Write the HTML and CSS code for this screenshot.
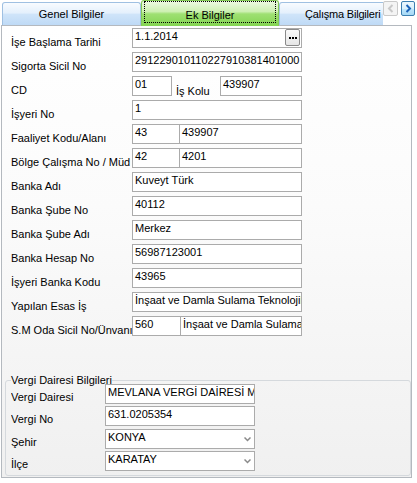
FILE: index.html
```html
<!DOCTYPE html>
<html lang="tr">
<head>
<meta charset="utf-8">
<title>Ek Bilgiler</title>
<link rel="stylesheet" href="styles.css">
</head>
<body>
<div class="window">
  <div class="tabbar">
    <div class="tabs">
      <div class="tab tab-blue first">Genel Bilgiler</div>
      <div class="tab tab-green active"><span class="focus">Ek Bilgiler</span></div>
      <div class="tab tab-blue last">Çalışma Bilgileri</div>
    </div>
    <div class="scroll-btn disabled">
      <svg width="8" height="9" viewBox="0 0 8 9"><path d="M5.5 1 L2 4.5 L5.5 8" fill="none" stroke="#c8c8c8" stroke-width="2"/></svg>
    </div>
    <div class="scroll-btn enabled">
      <svg width="8" height="9" viewBox="0 0 8 9"><path d="M2.5 1 L6 4.5 L2.5 8" fill="none" stroke="#1b62b8" stroke-width="2"/></svg>
    </div>
  </div>
  <div class="page">
    <div class="form">
      <div class="lbl">İşe Başlama Tarihi</div>
      <div class="field with-btn"><span class="val">1.1.2014</span>
        <span class="dots"><svg width="8" height="2" viewBox="0 0 8 2"><rect x="0" y="0" width="2" height="2" fill="#000"/><rect x="3" y="0" width="2" height="2" fill="#000"/><rect x="6" y="0" width="2" height="2" fill="#000"/></svg></span>
      </div>

      <div class="lbl">Sigorta Sicil No</div>
      <div class="field">291229010110227910381401000</div>

      <div class="lbl">CD</div>
      <div class="fieldrow">
        <div class="field w-cd">01</div>
        <div class="inline-lbl">İş Kolu</div>
        <div class="field w-iskolu">439907</div>
      </div>

      <div class="lbl">İşyeri No</div>
      <div class="field">1</div>

      <div class="lbl">Faaliyet Kodu/Alanı</div>
      <div class="fieldrow">
        <div class="field w-a">43</div>
        <div class="field w-b">439907</div>
      </div>

      <div class="lbl">Bölge Çalışma No / Müd</div>
      <div class="fieldrow">
        <div class="field w-a">42</div>
        <div class="field w-b">4201</div>
      </div>

      <div class="lbl">Banka Adı</div>
      <div class="field">Kuveyt Türk</div>

      <div class="lbl">Banka Şube No</div>
      <div class="field">40112</div>

      <div class="lbl">Banka Şube Adı</div>
      <div class="field">Merkez</div>

      <div class="lbl">Banka Hesap No</div>
      <div class="field">56987123001</div>

      <div class="lbl">İşyeri Banka Kodu</div>
      <div class="field">43965</div>

      <div class="lbl">Yapılan Esas İş</div>
      <div class="field">İnşaat ve Damla Sulama Teknolojileri</div>

      <div class="lbl">S.M Oda Sicil No/Ünvanı</div>
      <div class="fieldrow">
        <div class="field w-a2">560</div>
        <div class="field w-b2">İnşaat ve Damla Sulama Teknolojileri</div>
      </div>
    </div>

    <fieldset class="group">
      <legend>Vergi Dairesi Bilgileri</legend>
      <div class="vform">
        <div class="vlbl">Vergi Dairesi</div>
        <div class="field">MEVLANA VERGİ DAİRESİ MÜDÜRLÜĞÜ</div>

        <div class="vlbl">Vergi No</div>
        <div class="field">631.0205354</div>

        <div class="vlbl">Şehir</div>
        <div class="field combo"><span class="val">KONYA</span>
          <svg class="chev" width="7" height="5" viewBox="0 0 7 5"><path d="M0.5 0.5 L3.5 3.5 L6.5 0.5" fill="none" stroke="#8a8a8a" stroke-width="1.5"/></svg>
        </div>

        <div class="vlbl">İlçe</div>
        <div class="field combo"><span class="val">KARATAY</span>
          <svg class="chev" width="7" height="5" viewBox="0 0 7 5"><path d="M0.5 0.5 L3.5 3.5 L6.5 0.5" fill="none" stroke="#8a8a8a" stroke-width="1.5"/></svg>
        </div>
      </div>
    </fieldset>
  </div>
</div>
</body>
</html>
```

FILE: styles.css
```css
* { box-sizing: border-box; }

body {
  margin: 0;
  background: #ffffff;
  font-family: "Liberation Sans", Arial, sans-serif;
  font-size: 11px;
  color: #000;
}

.window {
  width: 417px;
  height: 483px;
}

/* ---------- tab strip ---------- */
.tabbar {
  display: flex;
  align-items: flex-start;
  height: 26px;
  position: relative;
  z-index: 1;
}

.tabs {
  display: flex;
  align-items: flex-start;
  width: 383px;
  height: 26px;
  overflow: hidden;
  padding-left: 2px;
}

.tab {
  flex: none;
  width: 138px;
  height: 23px;
  margin-top: 2px;
  border: 1px solid #9fc0e2;
  border-bottom: none;
  border-radius: 3px 3px 0 0;
  text-align: center;
  line-height: 13px;
  padding-top: 5px;
  white-space: nowrap;
}

.tab.first { width: 139px; }

.tab.last {
  text-align: left;
  padding-left: 25px;
  letter-spacing: -0.2px;
}

.tab-blue {
  background: linear-gradient(#f8fbff 0%, #e4f0fc 45%, #cfe4f9 52%, #bfdaf6 100%);
}

.tab-green {
  border-color: #84c957;
  background: linear-gradient(#eefae4 0%, #cdf0b2 42%, #9ee072 52%, #84d552 100%);
}

.tab.active {
  height: 26px;
  margin-top: 0;
  padding: 0 2px;
}

.focus {
  display: block;
  height: 22px;
  border: 1px dotted #000;
  padding-top: 7px;
  line-height: 13px;
}

.scroll-btn {
  flex: none;
  height: 15px;
  margin-top: 1px;
  border: 1px solid #c9c9c9;
  border-radius: 2px;
  display: flex;
  align-items: center;
  justify-content: center;
}

.scroll-btn.disabled {
  width: 15px;
  background: #f4f4f4;
}

.scroll-btn.enabled {
  width: 14px;
  margin-left: 3px;
  border-color: #3c7fb1;
  background: linear-gradient(#eaf6fd, #d9f0fc 50%, #bee6fd 51%, #a7d9f5);
}

/* ---------- page ---------- */
.page {
  margin-top: -1px;
  margin-left: 1px;
  width: 411px;
  height: 453px;
  border: 1px solid #b4b9bf;
  background: linear-gradient(#ffffff 0%, #fbfbfb 40%, #f0f0f0 100%);
  padding: 2px 1px 0 1px;
}

.form {
  display: grid;
  grid-template-columns: 121px 170px;
  grid-auto-rows: 20px;
  row-gap: 4px;
  padding-left: 8px;
}

.lbl, .vlbl {
  white-space: nowrap;
  overflow: hidden;
  line-height: 13px;
  padding-top: 8px;
  height: 22px;
}

.field {
  height: 20px;
  border: 1px solid #ababab;
  background: #fff;
  padding: 1px 2px 0;
  line-height: 13px;
  white-space: nowrap;
  overflow: hidden;
}

.fieldrow {
  display: flex;
  align-items: flex-start;
}

.w-cd { width: 40px; }
.inline-lbl {
  width: 48px;
  padding-left: 4px;
  padding-top: 9px;
  line-height: 13px;
  white-space: nowrap;
}
.w-iskolu { width: 82px; }

.w-a { width: 48px; }
.w-b { width: 123px; margin-left: -1px; }
.w-a2 { width: 49px; }
.w-b2 { width: 122px; margin-left: -1px; }

.with-btn {
  display: flex;
  justify-content: space-between;
  padding-right: 1px;
}

.dots {
  flex: none;
  width: 15px;
  height: 17px;
  margin-top: -1px;
  border: 1px solid #8a8a8a;
  border-radius: 2px;
  background: linear-gradient(#fafafa, #e6e6e6);
  display: flex;
  align-items: center;
  justify-content: center;
}

.dots svg { display: block; }

/* ---------- group box ---------- */
.group {
  margin: 38px 0 0 2px;
  width: 406px;
  border: 1px solid #d5d9dd;
  border-radius: 3px;
  padding: 0 5px 4px 5px;
  background: transparent;
}

.group legend {
  padding: 0;
  line-height: 13px;
  margin-left: 0;
}

.vform {
  margin-top: -3px;
  display: grid;
  grid-template-columns: 94px 150px;
  grid-auto-rows: 20px;
  row-gap: 2.4px;
}

.vlbl {
  padding-top: 7px;
}

.combo {
  display: flex;
  justify-content: space-between;
  align-items: flex-start;
}

.chev {
  margin-top: 6px;
  margin-right: 1px;
}
```
